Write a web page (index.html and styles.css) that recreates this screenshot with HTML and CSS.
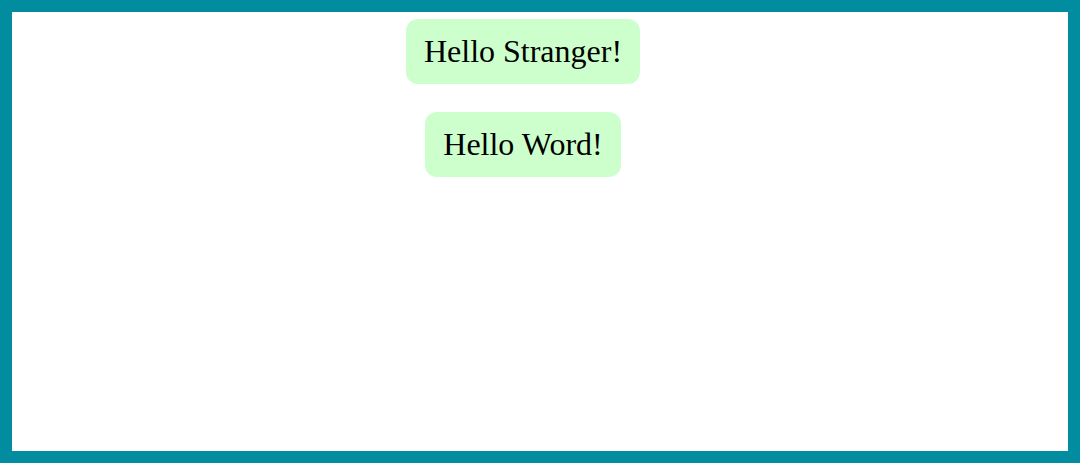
FILE: index.html
```html
<!DOCTYPE html>
<html>
<head>
<meta charset="utf-8">
<link rel="stylesheet" href="styles.css">
</head>
<body>
<div class="frame">
  <div class="stack">
    <div class="bubble">Hello Stranger!</div>
    <div class="bubble">Hello Word!</div>
  </div>
</div>
</body>
</html>
```
FILE: styles.css
```css
html, body {
  margin: 0;
  padding: 0;
}
body {
  width: 1080px;
  height: 463px;
  overflow: hidden;
  font-family: "Liberation Serif", "Times New Roman", serif;
}
.frame {
  box-sizing: border-box;
  width: 1080px;
  height: 463px;
  border: 12px solid #028c9f;
  background: #ffffff;
}
.stack {
  display: flex;
  flex-direction: column;
  align-items: center;
  gap: 28px;
  padding-top: 7px;
  padding-right: 34px;
}
.bubble {
  background: #ccffcc;
  border-radius: 12px;
  font-size: 32px;
  line-height: 37px;
  padding: 14px 18px;
  color: #000;
}
```
